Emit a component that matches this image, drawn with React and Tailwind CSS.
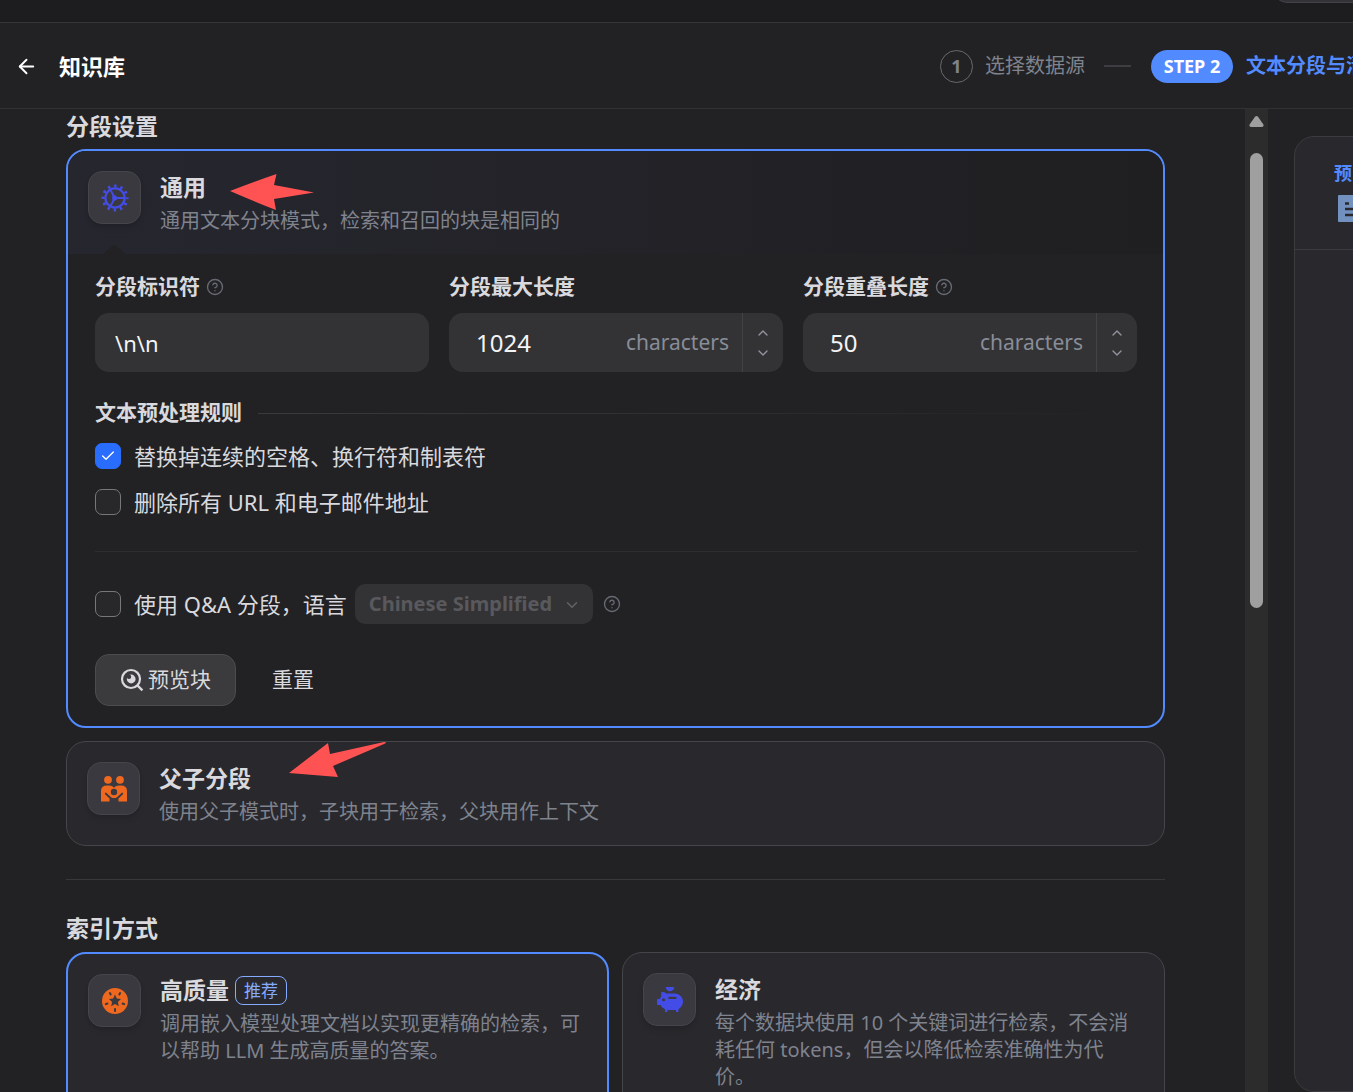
import React, { useState } from 'react';
import { ArrowLeft, ChevronDown, ChevronUp, Check, CircleHelp } from 'lucide-react';

const GearIcon = () => (
  <svg viewBox="0 0 28 28" className="h-7 w-7" fill="none" stroke="#444ce7" strokeWidth="2.2">
    <circle cx="14" cy="14" r="9.6" />
    <circle cx="14" cy="14" r="12" strokeWidth="3.2" strokeDasharray="2.4 3.883" strokeDashoffset="1.2" />
    <path d="M14 14H23M14 14L9.3 5.8M14 14L9.3 22.2" strokeWidth="1.8" />
    <path d="M11.6 10.2Q15.4 11.6 17.6 14Q15.4 16.4 11.6 17.8Q10.600 14 11.6 10.2Z" fill="#444ce7" stroke="none" />
  </svg>
);

const FamilyIcon = () => (
  <svg viewBox="0 0 28 28" className="h-7 w-7" fill="#ee6820">
    <circle cx="8" cy="4.8" r="3.9" />
    <circle cx="20" cy="4.8" r="3.9" />
    <path d="M1 26.4V16Q1 10.5 7 10.5H9Q13 10.5 14 13Q15 10.5 19 10.5H21Q27 10.5 27 16V26.4H18.5V24.6L17 22.4Q14 23.6 11 22.4L9.5 24.6V26.4Z" />
    <circle cx="14" cy="17" r="3.2" fill="#3a393f" />
    <path d="M5.8 18.6L10.4 23M22.2 18.6L17.6 23" stroke="#3a393f" strokeWidth="1.9" strokeLinecap="round" />
  </svg>
);

const StarIcon = () => (
  <svg viewBox="0 0 28 28" className="h-7 w-7">
    <circle cx="14" cy="14" r="13" fill="#ee6820" />
    <path
      d="M14 7.6L15.8 11.6L20 12L16.9 14.9L17.8 19.2L14 17L10.2 19.2L11.1 14.9L8 12L12.2 11.6Z"
      fill="#3a393f"
    />
    <path
      d="M8.9 6L9.7 7.4M19.1 6L18.3 7.4M4.8 17.1L6.4 16.5M23.2 17.1L21.6 16.5M14 22V24"
      stroke="#3a393f"
      strokeWidth="2"
      strokeLinecap="round"
    />
  </svg>
);

const PiggyIcon = () => (
  <svg viewBox="0 0 28 28" className="h-7 w-7" fill="#444ce7">
    <path d="M9.8 1H18.2C18.2 3.6 16.4 5.2 14 5.2S9.8 3.6 9.8 1Z" />
    <path d="M5.2 6.2Q8.6 5.6 10 7.4H18.5C23.5 7.4 27 11 27 15.6C27 19 25 21.8 22.4 23.2V26H20V24H11.4V26H9V23.2C6.8 22.2 5.4 20.8 4.6 19H2Q1 19 1 18V14Q1 13 2 13H3.8Q4.2 11.4 5.2 10.4Z" />
    <path d="M12.4 10.8H20.4V13H12.4Z" fill="#3a393f" />
    <circle cx="7.6" cy="13.8" r="1.5" fill="#3a393f" />
  </svg>
);

const PreviewIcon = () => (
  <svg viewBox="0 0 24 24" className="h-6 w-6" fill="none" stroke="currentColor" strokeWidth="2.2">
    <circle cx="11" cy="11" r="9" />
    <path d="M17.4 17.4L22.4 22.4" />
    <circle cx="11.2" cy="11" r="4.4" fill="currentColor" stroke="none" />
    <circle cx="9" cy="8.8" r="2.2" fill="#3b3b3e" stroke="none" />
  </svg>
);

const HelpIcon = () => <CircleHelp className="h-[18px] w-[18px] text-[#676a74]" strokeWidth={1.8} />;

const IconBox = ({ children }) => (
  <div className="flex h-[53px] w-[53px] shrink-0 items-center justify-center rounded-[14px] border border-[#46454b] bg-[#3a393f] shadow-md">
    {children}
  </div>
);

const OptionHeader = ({ icon, title, badge, description }) => (
  <div className="flex gap-[19px] py-5 pr-6 pl-5">
    <IconBox>{icon}</IconBox>
    <div className="mt-0.5 min-w-0 flex-1">
      <div className="flex h-7 items-center gap-1.5">
        <h3 className="text-[23px] leading-7 font-bold">{title}</h3>
        {badge && (
          <span className="rounded-lg border border-[#84abff] px-2 text-[17px] leading-[27px] text-[#84abff]">
            {badge}
          </span>
        )}
      </div>
      <p className="mt-1.5 text-[20px] leading-[27px] text-[#7f838d]">{description}</p>
    </div>
  </div>
);

const NumberField = ({ id, label, help, value, onChange }) => (
  <div>
    <div className="mb-[11px] flex h-[30px] items-center gap-1.5">
      <label htmlFor={id} className="text-[21px] font-bold">{label}</label>
      {help && <HelpIcon />}
    </div>
    <div className="flex h-[59px] overflow-hidden rounded-[14px] bg-[#333335]">
      <input
        id={id}
        type="text"
        inputMode="numeric"
        value={value}
        onChange={(e) => onChange(Number(e.target.value) || 0)}
        className="w-0 min-w-0 flex-1 bg-transparent pl-[27px] text-[24px] text-[#f4f4f6] outline-none"
      />
      <span className="self-center pr-[13px] text-[21px] text-[#898d98]">characters</span>
      <div className="flex w-[41px] flex-col items-center justify-center border-l border-[#434347] text-[#9295a0]">
        <button type="button" aria-label="+" onClick={() => onChange(value + 1)} className="flex h-5 w-full items-center justify-center">
          <ChevronUp className="h-4 w-4" />
        </button>
        <button type="button" aria-label="-" onClick={() => onChange(value - 1)} className="flex h-5 w-full items-center justify-center">
          <ChevronDown className="h-4 w-4" />
        </button>
      </div>
    </div>
  </div>
);

const CheckRow = ({ checked, onChange, children }) => (
  <label className="flex h-[26px] items-center gap-[13px] text-[22px] leading-[26px]">
    <span className="relative flex h-[26px] w-[26px]">
      <input
        type="checkbox"
        checked={checked}
        onChange={(e) => onChange(e.target.checked)}
        className="h-[26px] w-[26px] appearance-none rounded-[7px] border border-[#77777b] bg-[#28282a] checked:border-[#296dff] checked:bg-[#296dff]"
      />
      {checked && <Check className="pointer-events-none absolute top-[5px] left-[5px] h-4 w-4 text-white" />}
    </span>
    <span>{children}</span>
  </label>
);

const Stepper = () => (
  <ol className="flex w-[413px] shrink-0 items-center text-[20px] whitespace-nowrap">
    <li className="flex items-center gap-3 text-[#7f838d]">
      <span className="flex h-[33px] w-[33px] items-center justify-center rounded-full border border-[#69696f] text-[18px] font-bold">
        1
      </span>
      选择数据源
    </li>
    <li aria-hidden="true" className="mr-5 ml-[19px] h-0.5 w-[27px] shrink-0 bg-[#3d3d42]" />
    <li className="flex items-center gap-[13px] font-bold text-[#528bff]">
      <span className="flex h-[33px] w-[82px] items-center justify-center rounded-full bg-[#528bff] text-[18px] text-white">
        STEP 2
      </span>
      文本分段与清洗
    </li>
  </ol>
);

const Scrollbar = () => (
  <div className="flex w-[23px] shrink-0 flex-col items-center bg-[#2c2c2c] pt-[7px]">
    <svg viewBox="0 0 15 11" className="h-[11px] w-[15px]" fill="#9f9f9f">
      <path d="M6 .8Q7.5-.6 9 .8L14.4 8.5Q15 11 13 11H2Q0 11 .6 8.5Z" />
    </svg>
    <div className="mt-[26px] h-[455px] w-[13px] rounded-full bg-[#9f9f9f]" />
  </div>
);

const PreviewPanel = () => (
  <aside className="ml-[26px] w-[59px] shrink-0 overflow-hidden pt-[27px]">
    <div className="h-full w-[560px] rounded-[20px] border border-[#3b3b40] bg-[#29282d]">
      <div className="h-[113px] border-b border-[#3b3b40] pt-[23px] pl-[39px]">
        <h2 className="text-[18px] leading-[27px] font-bold text-[#528bff]">预览</h2>
        <svg viewBox="0 0 27 27" className="mt-2 ml-1 h-[27px] w-[27px]">
          <rect width="27" height="27" rx="1" fill="#7391bf" />
          <path d="M7 8.5H11M7 14H20M7 20H20" stroke="#29282d" strokeWidth="2.4" />
        </svg>
      </div>
    </div>
  </aside>
);

export default function App() {
  const [separator, setSeparator] = useState('\\n\\n');
  const [maxLength, setMaxLength] = useState(1024);
  const [overlap, setOverlap] = useState(50);
  const [replaceSpaces, setReplaceSpaces] = useState(true);
  const [removeUrls, setRemoveUrls] = useState(false);
  const [useQA, setUseQA] = useState(false);

  return (
    <div className="flex h-screen flex-col overflow-hidden bg-[#222224] font-['Noto_Sans','Noto_Sans_CJK_SC',sans-serif] text-[#d9d9de]">
      <div className="flex h-[23px] shrink-0 justify-end border-b border-[#353538] bg-[#1d1d20]">
        <div className="flex h-[3px] w-[80px] items-end overflow-hidden">
          <div className="h-9 w-[120px] shrink-0 rounded-[14px] border border-[#434347] bg-[#333337]" />
        </div>
      </div>

      <header className="flex h-[86px] shrink-0 items-center justify-between border-b border-[#313134] pt-px">
        <div className="flex items-center gap-[21px] pl-[15px] text-white">
          <button type="button" aria-label="返回">
            <ArrowLeft className="h-[23px] w-[23px]" />
          </button>
          <h1 className="text-[22px] font-bold">知识库</h1>
        </div>
        <Stepper />
      </header>

      <div className="flex min-h-0 flex-1">
        <main className="min-w-0 flex-1 overflow-hidden pr-20 pl-[66px]">
          <h2 className="mb-1.5 text-[23px] leading-[34px] font-bold">分段设置</h2>

          <section className="relative overflow-hidden rounded-[20px] border-2 border-[#528bff]">
            <div className="relative bg-linear-to-r from-[#26262f] to-[#1f1f21]">
              <OptionHeader
                icon={<GearIcon />}
                title="通用"
                description="通用文本分块模式，检索和召回的块是相同的"
              />
              <svg viewBox="0 0 22 9" className="absolute bottom-0 left-[35px] h-[9px] w-[22px]" fill="#222224">
                <path d="M0 9L8.5 1.2Q11-.8 13.5 1.2L22 9Z" />
              </svg>
            </div>
            <svg viewBox="0 0 84 36" className="absolute top-[23px] left-[162px] h-9 w-[84px]" fill="#ff5353">
              <path d="M0 17Q23 8 46.5 0L44 11L84 18.5L44 25L46 36Q23 27 0 17Z" />
            </svg>

            <div className="pt-[18px] pr-[26px] pb-5 pl-[27px]">
              <div className="grid grid-cols-3 gap-5">
                <div>
                  <div className="mb-[11px] flex h-[30px] items-center gap-1.5">
                    <label htmlFor="separator" className="text-[21px] font-bold">分段标识符</label>
                    <HelpIcon />
                  </div>
                  <input
                    id="separator"
                    type="text"
                    value={separator}
                    onChange={(e) => setSeparator(e.target.value)}
                    className="h-[59px] w-full rounded-[14px] bg-[#333335] px-5 text-[22px] text-[#f4f4f6] outline-none"
                  />
                </div>
                <NumberField id="max-length" label="分段最大长度" value={maxLength} onChange={setMaxLength} />
                <NumberField id="overlap" label="分段重叠长度" help value={overlap} onChange={setOverlap} />
              </div>

              <div className="mt-[26px] flex h-[30px] items-center gap-4">
                <h4 className="text-[21px] font-bold">文本预处理规则</h4>
                <div className="h-px flex-1 bg-linear-to-r from-[#3a3a3e] to-transparent" />
              </div>
              <div className="mt-[15px] flex flex-col gap-5">
                <CheckRow checked={replaceSpaces} onChange={setReplaceSpaces}>
                  替换掉连续的空格、换行符和制表符
                </CheckRow>
                <CheckRow checked={removeUrls} onChange={setRemoveUrls}>
                  删除所有 URL 和电子邮件地址
                </CheckRow>
              </div>

              <hr className="mt-9 border-[#2d2d30]" />

              <div className="mt-8 flex h-10 items-center">
                <CheckRow checked={useQA} onChange={setUseQA}>
                  使用 Q&amp;A 分段，语言
                </CheckRow>
                <div className="relative ml-2">
                  <select
                    aria-label="语言"
                    disabled
                    className="h-10 w-[238px] appearance-none rounded-[10px] bg-[#333335] pl-[14px] text-[20px] font-bold text-[#59595d]"
                  >
                    <option>Chinese Simplified</option>
                  </select>
                  <ChevronDown className="pointer-events-none absolute top-3 right-3 h-[18px] w-[18px] text-[#626266]" />
                </div>
                <span className="ml-2.5">
                  <HelpIcon />
                </span>
              </div>

              <div className="mt-[30px] flex text-[21px]">
                <button
                  type="button"
                  className="flex h-[52px] items-center gap-1 rounded-[14px] border border-[#4c4c50] bg-[#3b3b3e] px-6"
                >
                  <PreviewIcon />
                  预览块
                </button>
                <button type="button" className="h-[52px] px-9">重置</button>
              </div>
            </div>
          </section>

          <section className="relative mt-[13px] rounded-[20px] border border-[#46454b] bg-[#29282d]">
            <OptionHeader
              icon={<FamilyIcon />}
              title="父子分段"
              description="使用父子模式时，子块用于检索，父块用作上下文"
            />
            <svg viewBox="0 0 97 35" className="absolute top-0 left-[222px] h-[35px] w-[97px]" fill="#ff5353">
              <path d="M0 31L39 1L41 12L95 0Q99 0 95 2L44 24L49 35Z" />
            </svg>
          </section>

          <hr className="mt-[33px] border-[#38383b]" />

          <h2 className="mt-[31px] mb-[7px] text-[23px] leading-[34px] font-bold">索引方式</h2>
          <div className="grid grid-cols-2 gap-[13px]">
            <section className="min-h-[180px] rounded-[20px] border-2 border-[#528bff] bg-[#29282d]">
              <OptionHeader
                icon={<StarIcon />}
                title="高质量"
                badge="推荐"
                description="调用嵌入模型处理文档以实现更精确的检索，可以帮助 LLM 生成高质量的答案。"
              />
            </section>
            <section className="min-h-[180px] rounded-[20px] border border-[#46454b] bg-[#29282d]">
              <OptionHeader
                icon={<PiggyIcon />}
                title="经济"
                description="每个数据块使用 10 个关键词进行检索，不会消耗任何 tokens，但会以降低检索准确性为代价。"
              />
            </section>
          </div>
        </main>

        <Scrollbar />
        <PreviewPanel />
      </div>
    </div>
  );
}
